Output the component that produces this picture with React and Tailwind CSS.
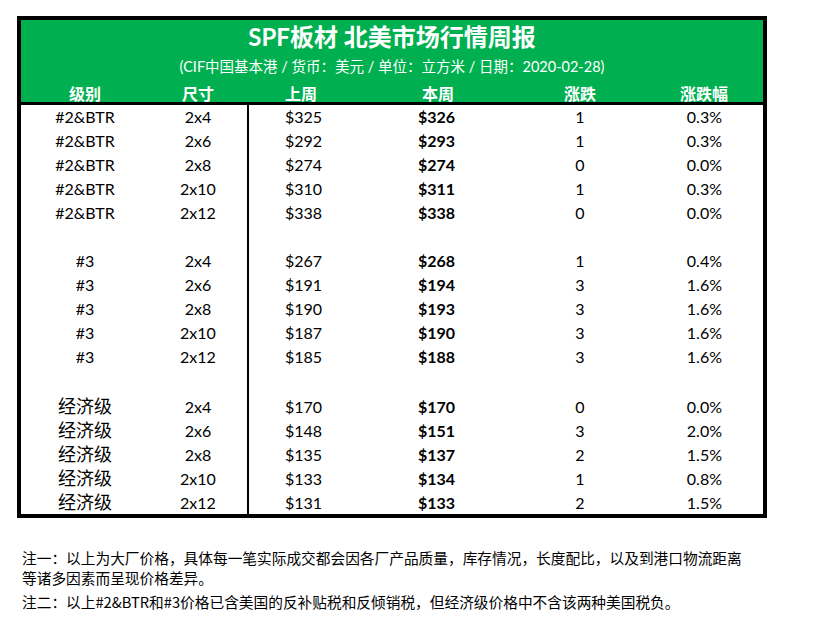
const FONT = "font-['Lato','Noto_Sans_CJK_SC',sans-serif]";

const GROUPS = [
  {
    level: "#2&BTR",
    rows: [
      ["2x4", "$325", "$326", "1", "0.3%"],
      ["2x6", "$292", "$293", "1", "0.3%"],
      ["2x8", "$274", "$274", "0", "0.0%"],
      ["2x10", "$310", "$311", "1", "0.3%"],
      ["2x12", "$338", "$338", "0", "0.0%"],
    ],
  },
  {
    level: "#3",
    rows: [
      ["2x4", "$267", "$268", "1", "0.4%"],
      ["2x6", "$191", "$194", "3", "1.6%"],
      ["2x8", "$190", "$193", "3", "1.6%"],
      ["2x10", "$187", "$190", "3", "1.6%"],
      ["2x12", "$185", "$188", "3", "1.6%"],
    ],
  },
  {
    level: "经济级",
    cjk: true,
    rows: [
      ["2x4", "$170", "$170", "0", "0.0%"],
      ["2x6", "$148", "$151", "3", "2.0%"],
      ["2x8", "$135", "$137", "2", "1.5%"],
      ["2x10", "$133", "$134", "1", "0.8%"],
      ["2x12", "$131", "$133", "2", "1.5%"],
    ],
  },
];

const COLS = "grid grid-cols-[128px_98px_120px_143px_140px_113px]";

function Row({ level, cjk, r }) {
  return (
    <div className={`${COLS} h-[24px] items-center text-[16px] text-black`}>
      <div className={`text-center ${cjk ? "text-[18px]" : ""}`}>{level}</div>
      <div className="text-center">{r[0]}</div>
      <div className="h-full flex items-center border-l-2 border-black pl-[36px]">{r[1]}</div>
      <div className="pl-[51px] font-bold">{r[2]}</div>
      <div className="text-center">{r[3]}</div>
      <div className="text-right pr-[41px]">{r[4]}</div>
    </div>
  );
}

function Spacer() {
  return (
    <div className={`${COLS} h-[24px]`}>
      <div />
      <div />
      <div className="h-full border-l-2 border-black" />
    </div>
  );
}

export default function App() {
  return (
    <div className={`w-[815px] h-[639px] bg-white ${FONT}`}>
      <div className="pt-[16px] pl-[17px]">
        <div className="w-[750px] border-4 border-black">
          <div className="bg-[#00b050] text-white pt-[2px] h-[82px]">
            <div className="h-[30px] flex items-center justify-center text-[24px] font-bold">
              SPF板材 北美市场行情周报
            </div>
            <div className="mt-[5px] h-[20px] flex items-center justify-center text-[14.5px]">
              (CIF中国基本港 / 货币：美元 / 单位：立方米 / 日期：2020-02-28)
            </div>
            <div className={`${COLS} mt-[5px] h-[20px] items-center text-[16px] font-bold`}>
              <div className="text-center">级别</div>
              <div className="text-center">尺寸</div>
              <div className="pl-[38px]">上周</div>
              <div className="pl-[55px]">本周</div>
              <div className="text-center">涨跌</div>
              <div className="text-right pr-[35px]">涨跌幅</div>
            </div>
          </div>
          <div className="h-[3px] bg-black" />
          <div className="pb-[1px]">
            {GROUPS.map((g, gi) => (
              <div key={gi}>
                {gi > 0 && <Spacer />}
                {g.rows.map((r, i) => (
                  <Row key={i} level={g.level} cjk={g.cjk} r={r} />
                ))}
              </div>
            ))}
          </div>
        </div>
      </div>
      <div className="mt-[30px] pl-[22px] w-[752px] text-[14.7px] leading-[20px] text-black font-['Noto_Sans_CJK_SC',sans-serif]">
        <p>注一：以上为大厂价格，具体每一笔实际成交都会因各厂产品质量，库存情况，长度配比，以及到港口物流距离等诸多因素而呈现价格差异。</p>
        <p className="mt-[4px]">注二：以上#2&amp;BTR和#3价格已含美国的反补贴税和反倾销税，但经济级价格中不含该两种美国税负。</p>
      </div>
    </div>
  );
}
